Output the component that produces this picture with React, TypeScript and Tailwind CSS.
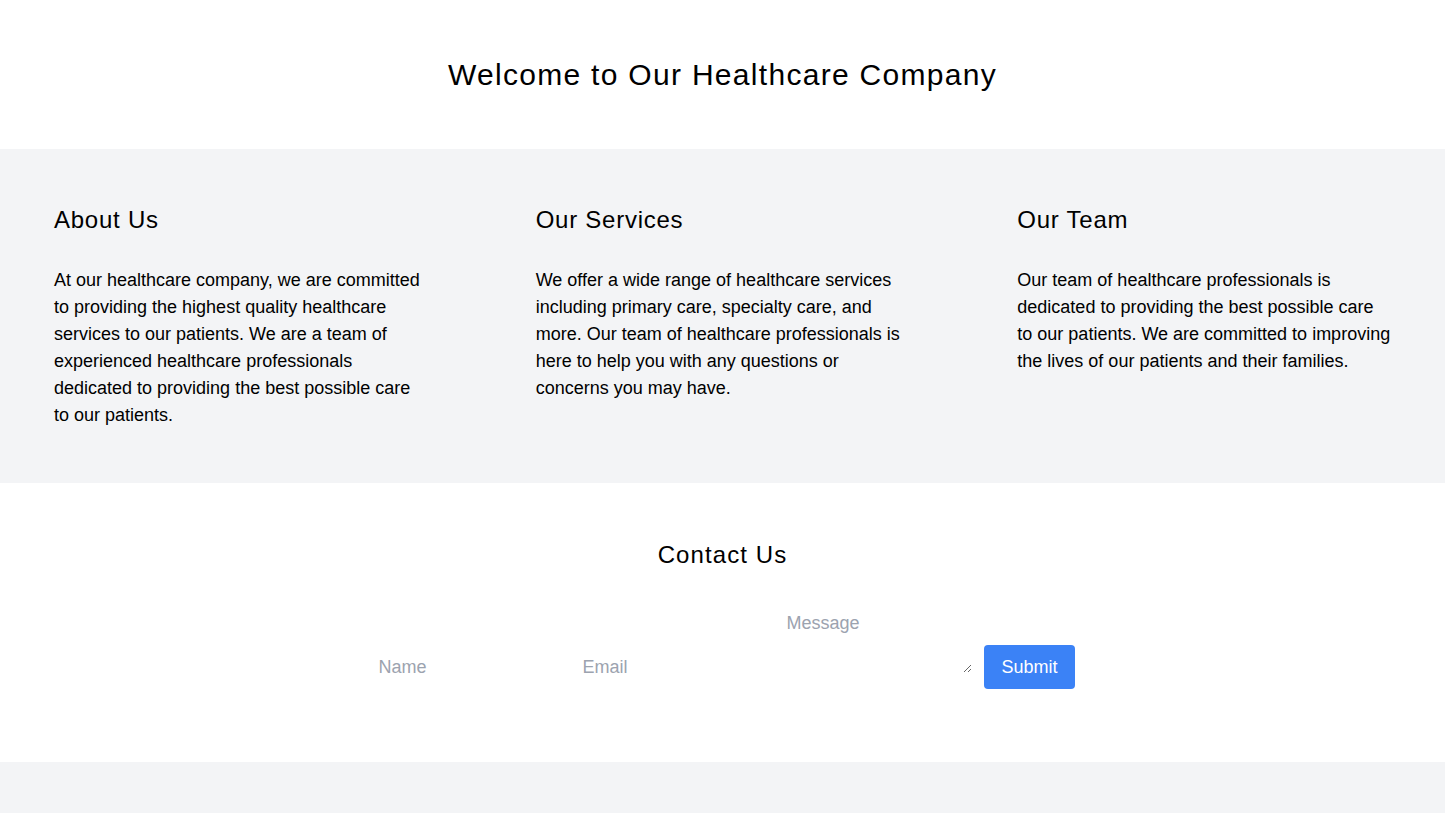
import React from "react";

const font = { fontFamily: "'Liberation Sans', Arial, sans-serif" };

function Column({ title, text }: { title: string; text: string }) {
  return (
    <div className="pl-[54px]">
      <h2 className="text-2xl leading-8 tracking-[0.75px] mb-[31px]">{title}</h2>
      <p className="w-[374px] text-lg leading-[27px]">{text}</p>
    </div>
  );
}

export default function App() {
  return (
    <div className="min-h-screen bg-white text-black" style={font}>
      <header className="pt-[57px] pb-[56px] text-center">
        <h1 className="text-3xl leading-9 tracking-[1.3px]">Welcome to Our Healthcare Company</h1>
      </header>
      <section className="bg-[#f3f4f6] pt-[55px] pb-[54px]">
        <div className="grid grid-cols-3">
          <Column
            title="About Us"
            text="At our healthcare company, we are committed to providing the highest quality healthcare services to our patients. We are a team of experienced healthcare professionals dedicated to providing the best possible care to our patients."
          />
          <Column
            title="Our Services"
            text="We offer a wide range of healthcare services including primary care, specialty care, and more. Our team of healthcare professionals is here to help you with any questions or concerns you may have."
          />
          <Column
            title="Our Team"
            text="Our team of healthcare professionals is dedicated to providing the best possible care to our patients. We are committed to improving the lives of our patients and their families."
          />
        </div>
      </section>
      <section className="pt-14 pb-[73px] text-center">
        <h2 className="text-2xl leading-8 tracking-[1.1px] mb-[30px]">Contact Us</h2>
        <form className="text-center">
          <input
            type="text"
            placeholder="Name"
            className="inline-block align-baseline w-[192px] mr-3 px-4 py-2 text-lg leading-7 placeholder:text-[#9ca3af] outline-none"
          />
          <input
            type="email"
            placeholder="Email"
            className="inline-block align-baseline w-[192px] mr-3 px-4 py-2 text-lg leading-7 placeholder:text-[#9ca3af] outline-none"
          />
          <textarea
            placeholder="Message"
            className="inline-block align-baseline w-[202px] mr-3 px-4 py-2 text-lg leading-7 placeholder:text-[#9ca3af] outline-none"
          />
          <button
            type="submit"
            className="inline-block align-baseline bg-[#3b82f6] text-white text-lg leading-7 px-[17px] py-2 mr-2 rounded"
          >
            Submit
          </button>
        </form>
      </section>
      <footer className="bg-[#f3f4f6] h-[80px]"></footer>
    </div>
  );
}
